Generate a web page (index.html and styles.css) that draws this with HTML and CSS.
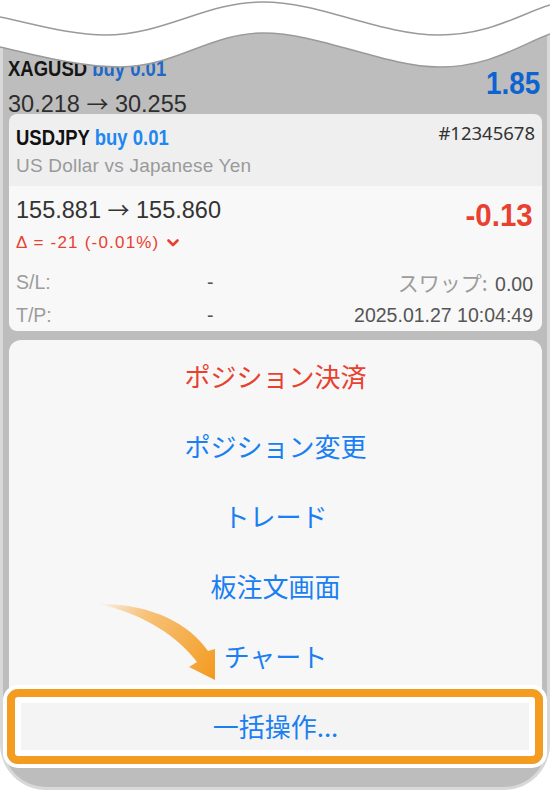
FILE: index.html
```html
<!DOCTYPE html>
<html lang="ja">
<head>
  <meta charset="UTF-8">
  <meta name="viewport" content="width=device-width, initial-scale=1.0">
  <title>Positions</title>
  <link rel="stylesheet" href="styles.css">
</head>
<body>
  <div class="phone">
    <!-- previous position, half hidden behind the torn edge -->
    <div class="prev">
      <div>
        <div class="sym-line"><span class="sym dim">XAGUSD</span> <span class="side dim">buy 0.01</span></div>
        <div class="price dim">30.218 <span class="arr">→</span> 30.255</div>
      </div>
      <div class="profit profit-blue">1.85</div>
    </div>

    <div class="card">
      <div class="card-head">
        <div class="head-row">
          <div class="sym-line"><span class="sym">USDJPY</span> <span class="side">buy 0.01</span></div>
          <div class="ticket">#12345678</div>
        </div>
        <div class="desc">US Dollar vs Japanese Yen</div>
      </div>
      <div class="card-body">
        <div class="body-top">
          <div>
            <div class="price">155.881 <span class="arr">→</span> 155.860</div>
            <div class="delta">Δ = -21 (-0.01%)
              <svg class="chevron" width="12" height="8" viewBox="0 0 12 8"><path d="M1.5 1.5 L6 6 L10.5 1.5" fill="none" stroke="#e8412f" stroke-width="2.6" stroke-linecap="round" stroke-linejoin="round"/></svg>
            </div>
          </div>
          <div class="profit profit-red">-0.13</div>
        </div>
        <div class="stat">
          <span class="label">S/L:</span>
          <span class="val">-</span>
          <span class="stat-right"><span class="label jp">スワップ:</span> <span class="val">0.00</span></span>
        </div>
        <div class="stat">
          <span class="label">T/P:</span>
          <span class="val">-</span>
          <span class="stat-right"><span class="val">2025.01.27 10:04:49</span></span>
        </div>
      </div>
    </div>

    <div class="sheet">
      <div class="sheet-item danger">ポジション決済</div>
      <div class="sheet-item">ポジション変更</div>
      <div class="sheet-item">トレード</div>
      <div class="sheet-item">板注文画面</div>
      <div class="sheet-item">チャート</div>
      <div class="sheet-item">一括操作...</div>
    </div>
  </div>

  <!-- torn edge at the top -->
  <svg class="tear" width="550" height="80" viewBox="0 0 550 80">
    <path d="M0,0 L550,0 L550,34 C520,45 490,67 439,67 C385,67 320,33 263,33 C210,33 175,67 120,67 C80,67 40,56 0,47 Z" fill="#fff"/>
    <path d="M0,17 C35,24 70,35 105,35 C165,35 205,2 263,2 C320,2 380,35 439,35 C490,35 520,14 550,5" fill="none" stroke="#9a9a9a" stroke-width="1.5"/>
    <path d="M0,47 C40,56 80,67 120,67 C175,67 210,33 263,33 C320,33 385,67 439,67 C490,67 520,45 550,34" fill="none" stroke="#9a9a9a" stroke-width="1.5"/>
  </svg>

  <!-- annotation: arrow and highlight -->
  <svg class="arrow" width="140" height="100" viewBox="90 590 140 100">
    <defs>
      <linearGradient id="arrowFade" x1="98" y1="604" x2="215" y2="678" gradientUnits="userSpaceOnUse">
        <stop offset="0" stop-color="#f6a534" stop-opacity="0"/>
        <stop offset="0.35" stop-color="#f7b760" stop-opacity="0.85"/>
        <stop offset="1" stop-color="#f39a1e"/>
      </linearGradient>
    </defs>
    <path d="M98,604 C150,603 190,624 208,651 L215,649 L215,680 L189,667 L197,662 C178,637 145,614 98,604 Z" fill="url(#arrowFade)"/>
  </svg>
  <div class="highlight"></div>
</body>
</html>
```

FILE: styles.css
```css
body { margin: 0; background: #fff; font-family: "Liberation Sans", Arial, sans-serif; }

.phone { position: relative; width: 550px; height: 790px; box-sizing: border-box; border: 3px solid #d8d8d8; border-top: 0; border-radius: 0 0 46px 46px; background: #bdbdbd; padding: 0 5px 0 6px; overflow: hidden; }

/* position rows */
.prev { display: flex; justify-content: space-between; height: 114px; box-sizing: border-box; padding: 55px 2px 0 0; margin-left: -1px; }
.sym-line { font-weight: bold; font-size: 22px; line-height: 28px; white-space: nowrap; transform: scaleX(0.84); transform-origin: left center; }
.sym { color: #111; }
.side { color: #1e88f0; }
.sym.dim { color: #151515; }
.side.dim { color: #1f68c8; }
.price { font-size: 23.5px; line-height: 30px; color: #333; white-space: nowrap; }
.prev .price { margin-top: 7px; line-height: 24px; }
.price.dim { color: #2e2e2e; }
.arr { font-family: "Noto Sans CJK JP", sans-serif; font-size: 22px; }
.profit { font-weight: bold; font-size: 31px; line-height: 36px; margin-top: 11px; transform: scaleX(0.9); transform-origin: right center; }
.profit-blue { color: #0d63cf; }
.profit-red { color: #e8412f; margin-top: 5px; transform: scaleX(0.95); }

.card { border-radius: 8px; overflow: hidden; }
.card-head { background: #efefef; height: 72px; box-sizing: border-box; padding: 10px 7px 0 7px; }
.head-row { display: flex; justify-content: space-between; }
.ticket { font-family: "Noto Sans", sans-serif; font-size: 18.5px; line-height: 28px; color: #333; margin-top: -5px; }
.desc { font-size: 19px; line-height: 28px; color: #9a9a9a; letter-spacing: 0.2px; }

.card-body { background: #f8f8f8; height: 145px; box-sizing: border-box; padding: 7px 9px 0 7px; }
.body-top { display: flex; justify-content: space-between; align-items: flex-start; }
.delta { font-size: 17px; line-height: 36px; color: #e8412f; letter-spacing: 1.2px; }
.chevron { margin-left: 2px; vertical-align: 1px; }

.stat { display: grid; grid-template-columns: 191px 1fr auto; font-size: 19.5px; line-height: 31px; color: #555; }
.body-top + .stat { margin-top: 6px; }
.label { color: #9c9c9c; }
.label.jp { font-family: "Noto Sans CJK JP", sans-serif; font-size: 21px; margin-right: 2px; }
.stat-right { text-align: right; }

/* action sheet */
.sheet { margin-top: 9px; background: #f7f7f7; border-radius: 12px; overflow: hidden; }
.sheet-item { height: 70px; display: flex; align-items: center; justify-content: center; font-family: "Noto Sans CJK JP", sans-serif; font-size: 26px; color: #1a80f2; }
.sheet-item.danger { color: #e8412f; }
.sheet-item:last-child { background: #f4f4f4; }

/* overlays */
.tear { position: absolute; left: 0; top: 0; }
.arrow { position: absolute; left: 90px; top: 590px; }
.highlight { position: absolute; left: 7px; top: 689px; width: 536px; height: 75px; box-sizing: border-box; border: 8px solid #f39c1f; border-radius: 11px; box-shadow: 0 0 0 4px #fff, inset 0 0 0 6px #fff; }
```
